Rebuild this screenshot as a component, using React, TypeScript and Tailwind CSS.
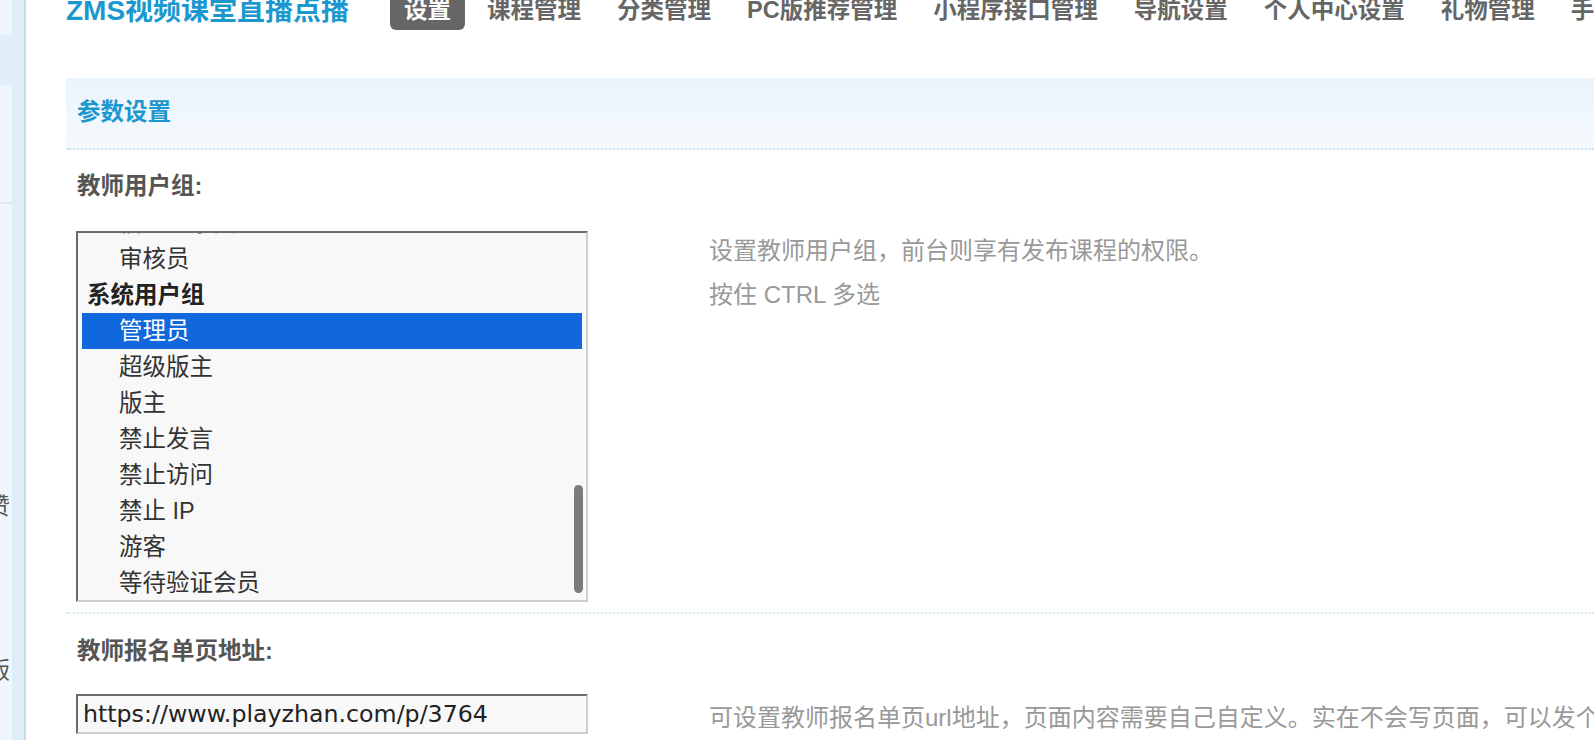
import React from 'react';

const navItems = ['设置', '课程管理', '分类管理', 'PC版推荐管理', '小程序接口管理', '导航设置', '个人中心设置', '礼物管理', '手机端设置'];

type Row = { label: string; group?: boolean; selected?: boolean };

const groupRows: Row[] = [
    { label: '特殊用户组', group: true },
    { label: '实习版主' },
    { label: '网站编辑' },
    { label: '信息监察员' },
    { label: '审核员' },
    { label: '系统用户组', group: true },
    { label: '管理员', selected: true },
    { label: '超级版主' },
    { label: '版主' },
    { label: '禁止发言' },
    { label: '禁止访问' },
    { label: '禁止 IP' },
    { label: '游客' },
    { label: '等待验证会员' },
];

function Sidebar() {
    return (
        <div className="flex w-[26px] shrink-0 h-full">
            <div className="w-[12px] bg-[#f0f7fc] flex flex-col overflow-hidden">
                <div className="h-[35px]" />
                <div className="h-[50px] bg-[#dfeef9]" />
                <div className="h-[119px] border-b-2 border-dotted border-[#d3e6f2]" />
                {/* clipped menu labels */}
                <div className="mt-[284px] h-[36px] leading-[36px] text-[23px] text-[#555] whitespace-nowrap">
                    <span className="-ml-[13px]">赞</span>
                </div>
                <div className="mt-[128px] h-[36px] leading-[36px] text-[23px] text-[#555] whitespace-nowrap">
                    <span className="-ml-[13px]">版</span>
                </div>
            </div>
            <div className="w-[12px] bg-[#deeef9]" />
            <div className="w-[2px] bg-[#c7dcea]" />
        </div>
    );
}

export default function App() {
    return (
        <div className="flex h-[740px] w-full overflow-hidden bg-white font-['Liberation_Sans','Noto_Sans_CJK_SC',sans-serif]">
            <Sidebar />

            <div className="flex-1 min-w-0 pl-[40px] overflow-hidden">
                {/* Top bar */}
                <div className="flex items-start -mt-[9px] h-[39px] whitespace-nowrap">
                    <div className="w-[324px] shrink-0 text-[28px] leading-[39px] font-bold text-[#1c98cf]">
                        ZMS视频课堂直播点播
                    </div>
                    <nav className="flex gap-[8px]">
                        {navItems.map((item, i) => (
                            <span
                                key={item}
                                className={`px-[14px] h-[39px] leading-[39px] text-[23.5px] font-bold ${
                                    i === 0 ? 'bg-[#666] text-white rounded-b-[6px]' : 'text-[#666]'
                                }`}
                            >
                                {item}
                            </span>
                        ))}
                    </nav>
                </div>

                {/* Section header */}
                <div className="mt-[48px] h-[72px] flex items-center pl-[11px] bg-gradient-to-b from-[#ebf4fc] to-[#f4f9fd] border-b-2 border-dotted border-[#cfe5f2]">
                    <h2 className="text-[23.5px] font-bold text-[#1c98cf]">参数设置</h2>
                </div>

                {/* 教师用户组 */}
                <div className="pl-[10px] pt-[19px] pb-[10px] border-b-2 border-dotted border-[#d6e9f5]">
                    <div className="pl-[1px] leading-[34px] text-[23.5px] font-bold text-[#555]">教师用户组:</div>
                    <div className="flex items-start mt-[28px]">
                        <div className="relative w-[512px] h-[371px] shrink-0 overflow-hidden border-2 border-[#cdcdcd] border-t-[#6b6b6b] border-l-[#6b6b6b] bg-[#f8f8f8]">
                            <div className="-mt-[136px]">
                                {groupRows.map((r) => (
                                    <div
                                        key={r.label}
                                        className={`mx-[4px] h-[36px] leading-[36px] text-[23.5px] whitespace-nowrap ${
                                            r.group ? 'pl-[5px] font-bold text-[#222]' : 'pl-[37px] text-[#333]'
                                        } ${r.selected ? 'bg-[#1167dc] text-white' : ''}`}
                                    >
                                        {r.label}
                                    </div>
                                ))}
                            </div>
                            {/* overlay scrollbar */}
                            <div className="absolute right-[3px] top-[252px] w-[9px] h-[108px] rounded-full bg-[#7b7b7b]" />
                        </div>
                        <div className="ml-[121px] -mt-[2px] leading-[44px] text-[24px] text-[#999] whitespace-nowrap">
                            <p>设置教师用户组，前台则享有发布课程的权限。</p>
                            <p>按住 CTRL 多选</p>
                        </div>
                    </div>
                </div>

                {/* 教师报名单页地址 */}
                <div className="pl-[10px] pt-[20px]">
                    <div className="pl-[1px] leading-[34px] text-[23.5px] font-bold text-[#555]">教师报名单页地址:</div>
                    <div className="flex items-start mt-[26px]">
                        <input
                            readOnly
                            value="https://www.playzhan.com/p/3764"
                            className="w-[512px] h-[40px] shrink-0 pl-[5px] border-2 border-[#cdcdcd] border-t-[#6b6b6b] border-l-[#6b6b6b] bg-[#f8f8f8] text-[23.7px] text-[#222] font-['DejaVu_Sans',sans-serif] outline-none"
                        />
                        <div className="ml-[121px] mt-[2px] leading-[44px] text-[24px] text-[#999] whitespace-nowrap">
                            可设置教师报名单页url地址，页面内容需要自己自定义。实在不会写页面，可以发个帖子链接过来。
                        </div>
                    </div>
                </div>
            </div>
        </div>
    );
}
